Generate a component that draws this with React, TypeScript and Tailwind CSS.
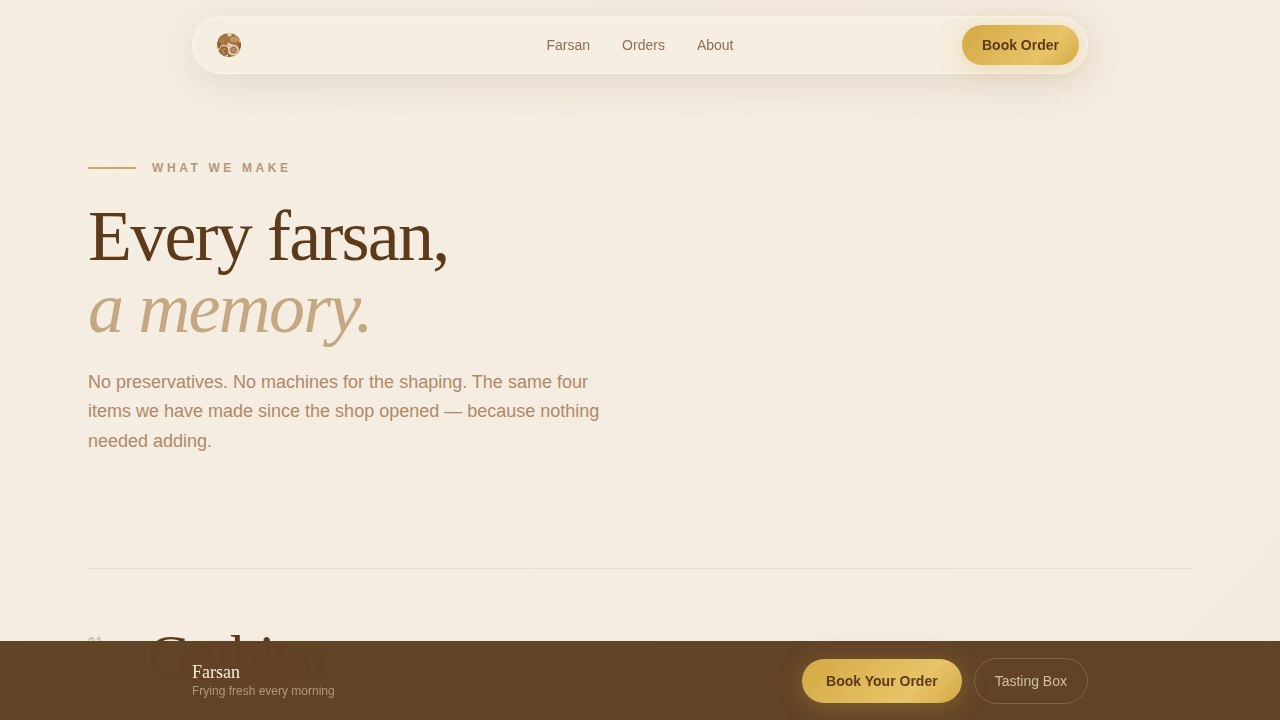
const navLinks = [
  { label: "Farsan", href: "#farsan" },
  { label: "Orders", href: "#orders" },
  { label: "About", href: "#about" },
];

const items = [{ number: "01", name: "Gathiya" }];

function Logo() {
  return (
    <svg width="24" height="24" viewBox="0 0 24 24" aria-hidden="true">
      <defs>
        <clipPath id="plate">
          <circle cx="12" cy="12" r="12" />
        </clipPath>
      </defs>
      <g clipPath="url(#plate)">
        <rect width="24" height="24" fill="#a5773f" />
        <path d="M10 0l6 0-2 3-3 1zM18 1l6 6-2 2-3-3z" fill="#e3d5b8" />
        <circle cx="7" cy="7" r="5.2" fill="#b07a42" stroke="#8a5c2e" strokeWidth=".8" />
        <path d="M4 6q3-3 5 0t-2 4" stroke="#8f6034" strokeWidth=".9" fill="none" />
        <ellipse cx="17" cy="6.5" rx="4.8" ry="3.6" fill="#c4935c" stroke="#94672f" strokeWidth=".7" />
        <circle cx="7" cy="18" r="5.6" fill="#9c6840" stroke="#e6d6bf" strokeWidth="1.2" />
        <path d="M4 16l4 5M8 15l-3 6" stroke="#bb8a5e" strokeWidth="1" />
        <circle cx="16.5" cy="17" r="4.8" fill="#caa985" stroke="#ece0cd" strokeWidth="1.1" />
        <circle cx="16.5" cy="17" r="2.8" fill="#bd8e69" stroke="#93623d" strokeWidth=".8" />
        <path d="M10 11l2-2 1 2 3 0-2 3-3-1z" fill="#e2cfc4" />
        <path d="M0 10l3 2-1 3M21 11l3 1-2 3M11 21l2 3" stroke="#80522a" strokeWidth="1.3" fill="none" />
        <path d="M1 19l4 4M19 22l4-4" stroke="#cfa73f" strokeWidth="1.4" />
      </g>
    </svg>
  );
}

function Navbar() {
  return (
    <header className="fixed inset-x-0 top-4 z-50 px-6">
      <nav className="mx-auto grid max-w-4xl grid-cols-[1fr_auto_1fr] items-center rounded-full border border-[#fbf6ec] bg-[#f5eee1] p-2 shadow-[0_8px_40px_rgba(92,58,26,0.12)]">
        <a href="#home" aria-label="Farsan home" className="ml-4 justify-self-start">
          <Logo />
        </a>
        <div className="flex items-center gap-8">
          {navLinks.map((link) => (
            <a key={link.label} href={link.href} className="text-sm text-[#8b705a] hover:text-[#5c3a1a]">
              {link.label}
            </a>
          ))}
        </div>
        <button
          type="button"
          className="h-10 justify-self-end rounded-full bg-linear-135 from-[#d4a843] via-[#e8c468] via-70% to-[#d4a843] px-5 text-sm font-semibold text-[#5c3a1a] shadow-[0_4px_24px_rgba(212,168,67,0.3)]"
        >
          Book Order
        </button>
      </nav>
    </header>
  );
}

function BottomBar() {
  return (
    <aside className="fixed inset-x-0 bottom-0 z-40 border-t border-[#5e4525] bg-[#5e3f23]/98 px-6 py-4 backdrop-blur-xl">
      <div className="mx-auto flex max-w-4xl items-center justify-between">
        <div className="flex flex-col gap-px pb-0.5">
          <p className="font-['Liberation_Serif',serif] text-lg leading-5 text-[#f9ecd8]">Farsan</p>
          <p className="text-xs leading-4 text-[#b19781]">Frying fresh every morning</p>
        </div>
        <div className="flex items-center gap-3">
          <button
            type="button"
            className="h-11 rounded-full bg-linear-135 from-[#d4a843] via-[#e8c468] via-70% to-[#d4a843] px-6 text-sm font-semibold text-[#5c3a1a] shadow-[0_4px_24px_rgba(212,168,67,0.3)]"
          >
            Book Your Order
          </button>
          <button type="button" className="rounded-full border border-[#846446] px-5 py-3 text-sm text-[#d3bda6]">
            Tasting Box
          </button>
        </div>
      </div>
    </aside>
  );
}

export default function App() {
  return (
    <div className="min-h-screen bg-[#f4ece0] bg-linear-135 from-[#f5eee2] to-[#f3ebde] font-['Liberation_Sans',sans-serif]">
      <Navbar />
      <main className="mx-auto max-w-6xl px-6 pt-40">
        <section>
          <div className="mb-6 flex items-center gap-4">
            <span className="h-0.5 w-12 bg-[#cfa768]" />
            <span className="text-xs font-semibold tracking-[0.3em] text-[#b8977a] uppercase">What we make</span>
          </div>
          <h1 className="font-['Liberation_Serif',serif] text-7xl leading-none tracking-tight text-[#5c3a1a]">
            Every farsan,
            <br />
            <em className="text-[#c4a882]">a memory.</em>
          </h1>
          <p className="mt-6 max-w-lg text-lg leading-relaxed text-[#b08968]">
            No preservatives. No machines for the shaping. The same four items we have made since the shop opened —
            because nothing needed adding.
          </p>
        </section>

        <section id="farsan" className="mt-28">
          {items.map((item) => (
            <article key={item.number} className="flex border-t border-[#e5dccd] pt-[57px]">
              <span className="w-15 shrink-0 pt-2 text-xs font-semibold tracking-widest text-[#c8bbab]">{item.number}</span>
              <h2 className="font-['Liberation_Serif',serif] text-6xl leading-none tracking-tight text-[#5c3a1a]">
                {item.name}
              </h2>
            </article>
          ))}
        </section>
      </main>
      <BottomBar />
    </div>
  );
}
